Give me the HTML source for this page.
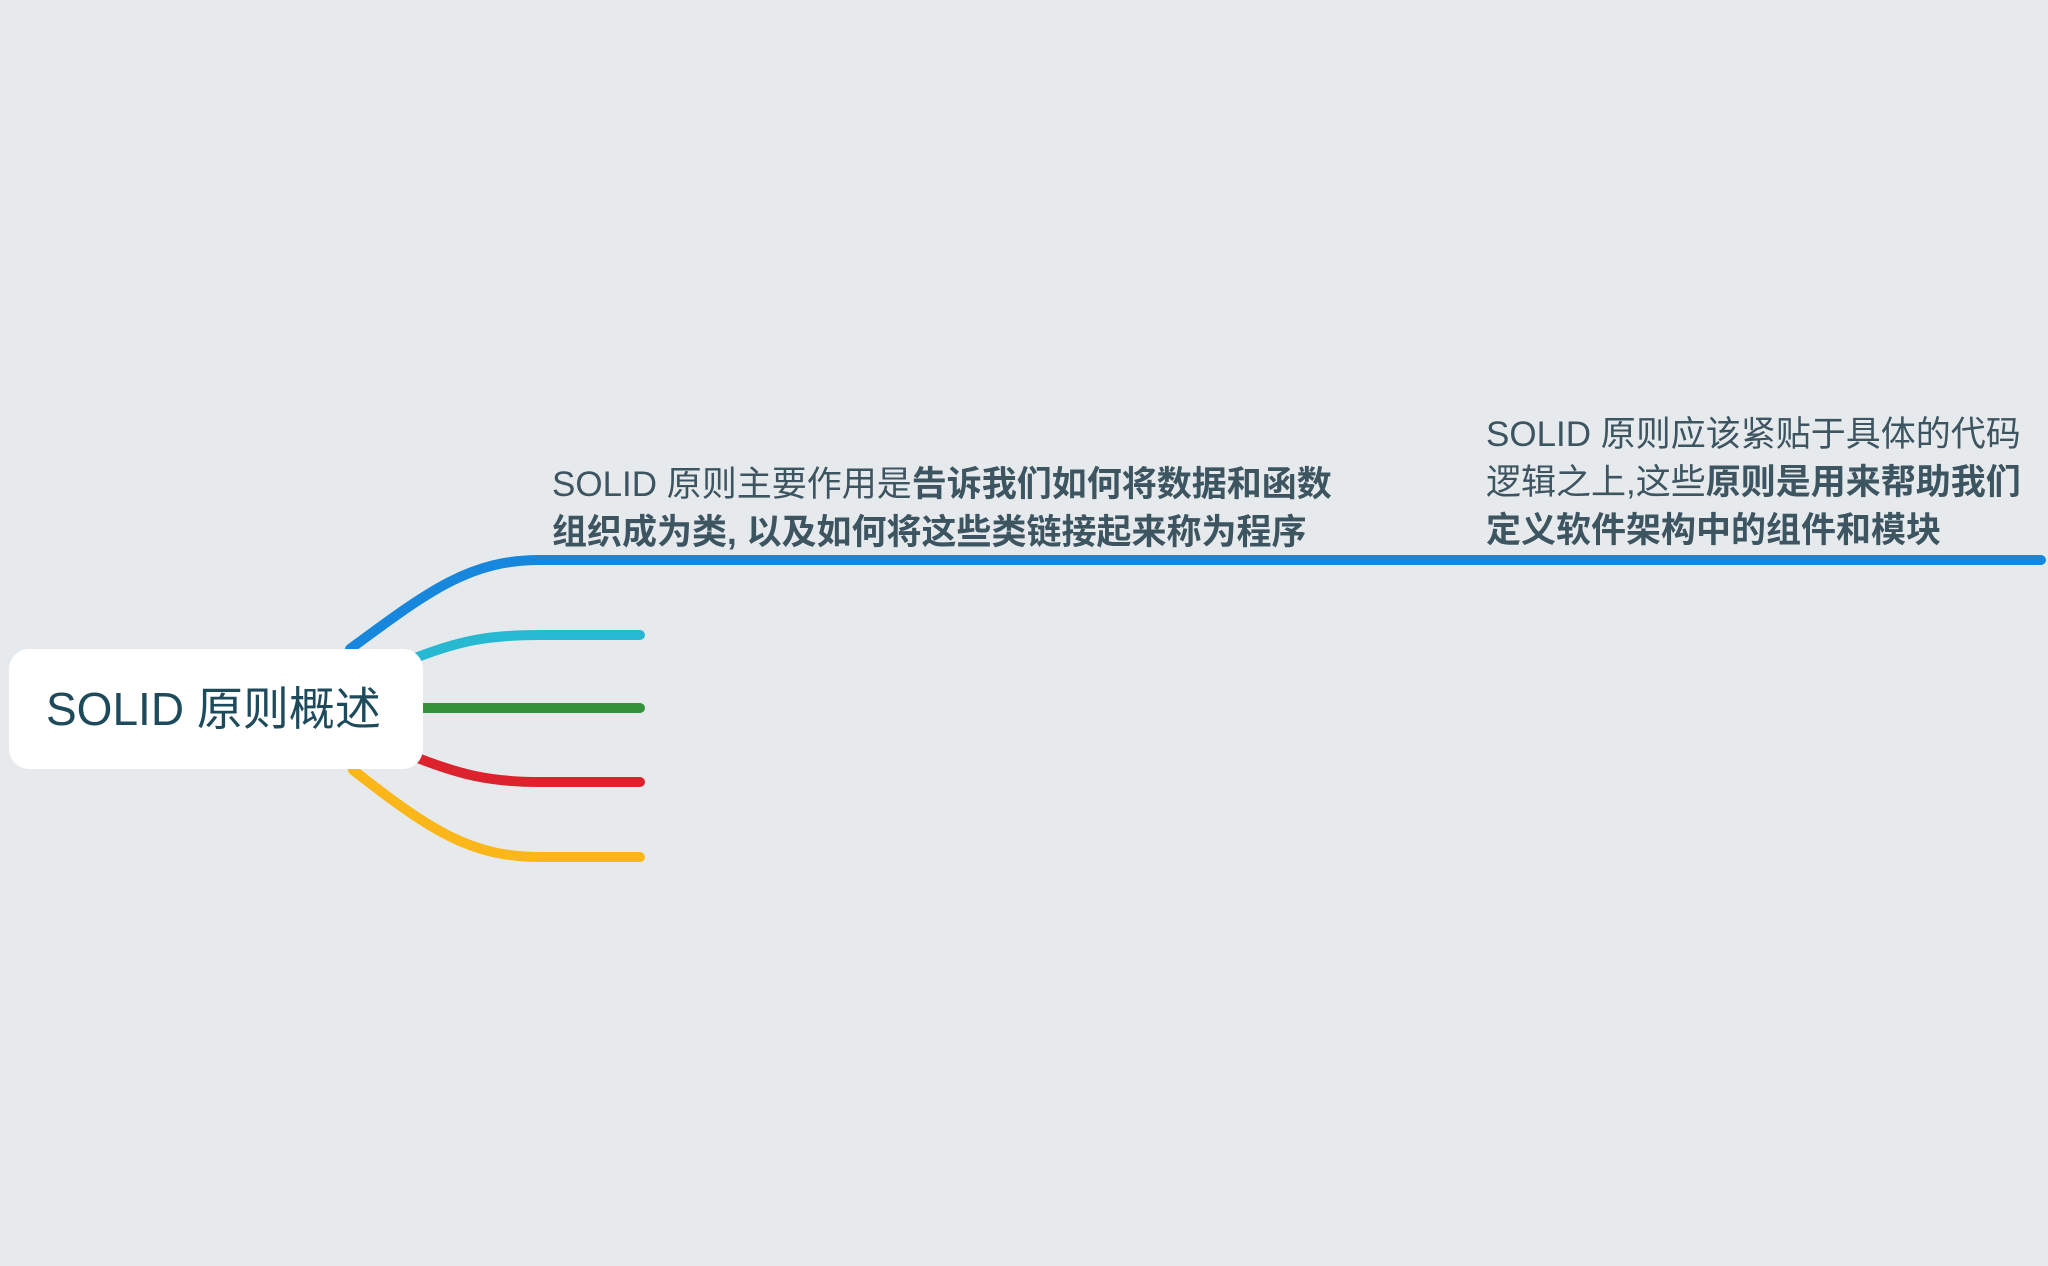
<!DOCTYPE html>
<html><head><meta charset="utf-8"><style>
html,body{margin:0;padding:0;}
body{width:2048px;height:1266px;background:#e6eaed;position:relative;overflow:hidden;font-family:"Liberation Sans","Noto Sans CJK SC",sans-serif;}
svg{position:absolute;left:0;top:0;}
.root{position:absolute;left:9px;top:649px;width:414px;height:120px;background:#fff;border-radius:20px;box-sizing:border-box;padding-left:37px;line-height:120px;font-size:46px;color:#1e4b5c;}
.t{position:absolute;font-size:35px;line-height:48px;color:#3d5461;white-space:nowrap;}
b{font-weight:bold;}
</style></head><body>
<svg width="2048" height="1266">
<g fill="none" stroke-linecap="round" stroke-width="10">
<path d="M350 649 C430 590 470 560 540 560 L2041 560" stroke="#1687dd"/>
<path d="M410 660 C460 640 490 635 540 635 L640 635" stroke="#28b9d2"/>
<path d="M420 708 L640 708" stroke="#35923b"/>
<path d="M410 755 C460 775 490 782 540 782 L640 782" stroke="#dc222c"/>
<path d="M353 770 C430 830 470 857 540 857 L640 857" stroke="#fbb619"/>
</g>
</svg>
<div class="root">SOLID 原则概述</div>
<div class="t" style="left:552px;top:461px;">SOLID 原则主要作用是<b>告诉我们如何将数据和函数</b><br><b>组织成为类, 以及如何将这些类链接起来称为程序</b></div>
<div class="t" style="left:1486px;top:411px;">SOLID 原则应该紧贴于具体的代码<br>逻辑之上,这些<b>原则是用来帮助我们</b><br><b>定义软件架构中的组件和模块</b></div>
</body></html>
